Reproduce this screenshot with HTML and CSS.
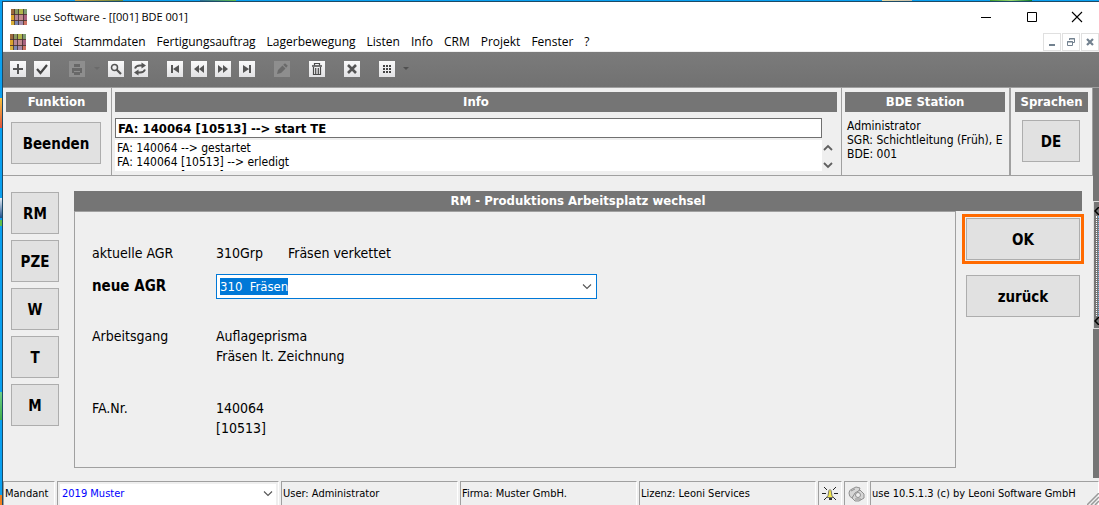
FILE: index.html
```html
<!DOCTYPE html>
<html lang="de">
<head>
<meta charset="utf-8">
<title>use Software - [[001] BDE 001]</title>
<link rel="stylesheet" href="styles.css">
</head>
<body>
<svg class="defs" aria-hidden="true">
  <defs>
    <symbol id="logo" viewBox="0 0 16 16">
      <rect width="16" height="16" fill="#b9826a"/>
      <path fill="#9c6a3c" d="M0 0h4v5H0z"/><path fill="#8a9a62" d="M4 0h4v5H4z"/><path fill="#b0b64a" d="M8 0h4v5H8z"/><path fill="#7f9c70" d="M12 0h4v5h-4z"/>
      <path fill="#dba32c" d="M0 6h4v5H0z"/><path fill="#b58596" d="M4 6h4v5H4z"/><path fill="#c48a8e" d="M8 6h4v5H8z"/><path fill="#a8617f" d="M12 6h4v5h-4z"/>
      <path fill="#d8b03a" d="M0 12h4v4H0z"/><path fill="#7a88b4" d="M4 12h4v4H4z"/><path fill="#a58cab" d="M8 12h4v4H8z"/><path fill="#cf7466" d="M12 12h4v4h-4z"/>
      <path stroke="#3e2b2c" stroke-opacity=".75" d="M3.500 0v16M7.500 0v16M12.500 0v16M0 5.500h16M0 11.500h16"/>
    </symbol>
    <symbol id="chev" viewBox="0 0 10 6"><path d="M1 .5l4 4 4-4" fill="none" stroke="#555" stroke-width="1.100"/></symbol>
  </defs>
</svg>
<div class="desktop">
<div class="window">
  <header class="titlebar">
    <svg class="logo"><use href="#logo"/></svg>
    <h1 class="title">use Software - [[001] BDE 001]</h1>
    <div class="winbuttons">
      <button aria-label="Minimieren"><svg width="12" height="12"><path d="M1 6.500h10" stroke="#000"/></svg></button>
      <button aria-label="Maximieren"><svg width="12" height="12"><path d="M1.500 1.500h9v9h-9z" fill="none" stroke="#000"/></svg></button>
      <button aria-label="Schließen"><svg width="12" height="12"><path d="M1 1l10 10M11 1L1 11" stroke="#000" stroke-width="1.100"/></svg></button>
    </div>
  </header>
  <nav class="menubar">
    <svg class="logo"><use href="#logo"/></svg>
    <div class="menus"><button>Datei</button><button>Stammdaten</button><button>Fertigungsauftrag</button><button>Lagerbewegung</button><button>Listen</button><button>Info</button><button>CRM</button><button>Projekt</button><button>Fenster</button><button>?</button></div>
    <div class="mdibuttons">
      <button aria-label="Fenster minimieren"><svg width="10" height="10"><path d="M2 8h6" stroke="#72818f" stroke-width="2"/></svg></button>
      <button aria-label="Fenster wiederherstellen"><svg width="10" height="10" fill="none" stroke="#72818f"><path d="M3.500 3V1.500h5v4H7M3 2h6M1.500 4.500h5v4h-5zM1 5h6"/></svg></button>
      <button aria-label="Fenster schließen"><svg width="10" height="10"><path d="M2 2l6 6M8 2L2 8" stroke="#72818f" stroke-width="2.200"/></svg></button>
    </div>
  </nav>
  <div class="toolbar" role="toolbar">
    <div class="group">
      <button class="tool" aria-label="Neu"><svg viewBox="0 0 16 16"><path d="M8 3v10M3 8h10" stroke="#555" stroke-width="2"/></svg></button>
      <button class="tool" aria-label="Speichern"><svg viewBox="0 0 16 16"><path d="M3 8l3.500 4L13 4" fill="none" stroke="#444" stroke-width="2.200"/></svg></button>
    </div>
    <div class="group">
      <button class="tool" disabled aria-label="Drucken"><svg viewBox="0 0 16 16" fill="#686868"><path d="M5 3h6v3H5zM3 7h10v5h-2v-2H5v2H3zM5 11h6v3H5z"/></svg></button>
      <svg class="drop faint" viewBox="0 0 7 4"><path d="M1 0h6L4 3z"/></svg>
      <button class="tool" aria-label="Suchen"><svg viewBox="0 0 16 16" fill="none" stroke="#555"><circle cx="6.500" cy="6.500" r="3" stroke-width="1.500"/><path d="M8.500 8.500L13 13" stroke-width="2.200"/></svg></button>
      <button class="tool" aria-label="Aktualisieren"><svg viewBox="0 0 16 16" fill="none" stroke="#555" stroke-width="1.900"><path d="M3 7.500Q4 4.500 8 4.500h3M13 8.500Q12 11.500 8 11.500H5"/><path d="M9.500 1.500L14 4.500 9.500 7.500zM6.500 8.500L2 11.500 6.500 14.500z" fill="#555" stroke="none"/></svg></button>
    </div>
    <div class="group">
      <button class="tool" aria-label="Erster"><svg viewBox="0 0 16 16" fill="#555"><path d="M4 4h2v8H4zM6 8l6-4v8z"/></svg></button>
      <button class="tool" aria-label="Zurückblättern"><svg viewBox="0 0 16 16" fill="#555"><path d="M3 8l5-4v8zM8 8l5-4v8z"/></svg></button>
      <button class="tool" aria-label="Vorblättern"><svg viewBox="0 0 16 16" fill="#555"><path d="M8 8L3 4v8zM13 8L8 4v8z"/></svg></button>
      <button class="tool" aria-label="Letzter"><svg viewBox="0 0 16 16" fill="#555"><path d="M10 4h2v8h-2zM10 8L4 4v8z"/></svg></button>
    </div>
    <div class="group">
      <button class="tool" disabled aria-label="Bearbeiten"><svg viewBox="0 0 16 16" fill="#6a6a6a"><path d="M3 13l1-4 4.500-4.500 3 3L7 12zM9.200 3.800L11 2.200l2.800 2.600-1.600 2z"/></svg></button>
    </div>
    <div class="group">
      <button class="tool" aria-label="Löschen"><svg viewBox="0 0 16 16" fill="none" stroke="#4a4a4a"><path d="M3 5h10" stroke-width="1.500"/><path d="M5.500 4.500V2.500h5v2M4.500 6v7.500h7V6M6.700 7v6M9.300 7v6" stroke-width="1.200"/></svg></button>
    </div>
    <div class="group">
      <button class="tool" aria-label="Abbrechen"><svg viewBox="0 0 16 16"><path d="M4 4l8 8M12 4l-8 8" stroke="#555" stroke-width="2.600"/></svg></button>
    </div>
    <div class="group">
      <button class="tool" aria-label="Ansicht"><svg viewBox="0 0 16 16" fill="#444"><path d="M4 4h2v2H4zM7 4h2v2H7zM10 4h2v2h-2zM4 7h2v2H4zM7 7h2v2H7zM10 7h2v2h-2zM4 10h2v2H4zM7 10h2v2H7zM10 10h2v2h-2z"/></svg></button>
      <svg class="drop" viewBox="0 0 7 4"><path d="M0 0h6L3 3z"/></svg>
    </div>
  </div>

  <div class="workspace">
    <div class="client">
      <div class="top">
        <section class="cell">
          <h2 class="bar">Funktion</h2>
          <button class="btn beenden">Beenden</button>
        </section>
        <section class="cell">
          <h2 class="bar">Info</h2>
          <div class="infobody">
            <input class="current" aria-label="Aktuelle Meldung" value="FA: 140064 [10513] --&gt; start TE" readonly>
            <div class="log">
              <div class="lines"><p>FA: 140064 --&gt; gestartet</p><p>FA: 140064 [10513] --&gt; erledigt</p><p>FA: 140064 [10513] --&gt; start</p></div>
              <div class="spin">
                <button aria-label="Nach oben"><svg viewBox="0 0 10 8"><path d="M1 6l4-4 4 4" fill="none" stroke="#606060" stroke-width="1.800"/></svg></button>
                <button aria-label="Nach unten"><svg viewBox="0 0 10 8"><path d="M1 2l4 4 4-4" fill="none" stroke="#606060" stroke-width="1.800"/></svg></button>
              </div>
            </div>
          </div>
        </section>
        <section class="cell">
          <h2 class="bar">BDE Station</h2>
          <div class="station"><p>Administrator</p><p>SGR: Schichtleitung (Früh), E</p><p>BDE: 001</p></div>
        </section>
        <section class="cell">
          <h2 class="bar">Sprachen</h2>
          <button class="btn lang">DE</button>
        </section>
      </div>
      <main class="content">
        <nav class="side">
          <button class="btn">RM</button><button class="btn">PZE</button><button class="btn">W</button><button class="btn">T</button><button class="btn">M</button>
        </nav>
        <section class="work">
          <h2 class="bar">RM - Produktions Arbeitsplatz wechsel</h2>
          <div class="workbody">
            <form class="panel">
              <span class="label">aktuelle AGR</span>
              <div class="value pair"><span>310Grp</span><span>Fräsen verkettet</span></div>
              <label class="label strong" for="agr">neue AGR</label>
              <div class="combo"><input id="agr" type="text" value="310&nbsp; Fräsen" spellcheck="false" autocomplete="off"><button type="button" aria-label="Auswahl öffnen"><svg width="10" height="6"><use href="#chev"/></svg></button></div>
              <span class="label wide">Arbeitsgang</span>
              <div class="value wide"><p>Auflageprisma</p><p>Fräsen lt. Zeichnung</p></div>
              <span class="label wide">FA.Nr.</span>
              <div class="value wide"><p>140064</p><p>[10513]</p></div>
            </form>
            <div class="actions">
              <div class="mark"><button class="btn">OK</button></div>
              <button class="btn back">zurück</button>
            </div>
          </div>
        </section>
      </main>
    </div>
    <div class="rail">
      <button class="handle" aria-label="Seitenleiste öffnen">
        <svg width="5" height="8"><path d="M5 0L1 4l4 4" fill="none" stroke="#000" stroke-width="1.500"/></svg>
        <span class="dots"></span>
        <svg width="5" height="8"><path d="M5 0L1 4l4 4" fill="none" stroke="#000" stroke-width="1.500"/></svg>
      </button>
    </div>
  </div>

  <footer class="status">
    <label class="sp" for="mandant">Mandant</label>
    <div class="sp selectwrap"><select id="mandant"><option>2019 Muster</option></select><svg class="selchev" width="10" height="6"><use href="#chev"/></svg></div>
    <span class="sp">User: Administrator</span>
    <span class="sp">Firma: Muster GmbH.</span>
    <span class="sp">Lizenz: Leoni Services</span>
    <span class="sp icon"><svg width="16" height="16"><path d="M2 1l3 3M14 1l-3 3M0 7.500h4M16 7.500h-4M2 14l3-3M14 14l-3-3" stroke="#222"/><path d="M4.500 11.500q2-1.500 2-4.500 0-3 1.500-3.500Q9.500 4 9.500 7q0 3 2 4.500z" fill="#f4e84a" stroke="#555" stroke-width=".8"/><path d="M7 12h3v2H7z" fill="#333"/></svg></span>
    <span class="sp icon"><svg width="17" height="16" fill="#d6d6d6" stroke="#909090"><path d="M1 7q0-3 3-4l4-2 4 1-1 3-4 3-3 4q-3-1-3-5z"/><path d="M4 12l3-5 5-3 4 4v4l-5 3H7z"/><circle cx="10" cy="9" r="2.500" fill="#efefef"/><path d="M3 5l4-2M7 13l6 0" fill="none"/></svg></span>
    <span class="sp">use 10.5.1.3 (c) by Leoni Software GmbH</span>
    <svg class="grip" width="12" height="12"><path d="M0 12L12 0M4 12l8-8M8 12l4-4" stroke="#999" stroke-width="1.500"/></svg>
  </footer>
</div>
</div>
<script src="app.js"></script>
</body>
</html>
```
FILE: styles.css
```css
* { box-sizing: border-box; }
html, body { height: 100%; margin: 0; }
body {
  --face: #efefef;
  --dark: #757575;
  --line: #a0a0a0;
  --tahoma: "DejaVu Sans Condensed", "Noto Sans", sans-serif;
  --segoe: "Open Sans", "Noto Sans", sans-serif;
  font: 12px/14px var(--tahoma);
  color: #000;
  overflow: hidden;
}
h1, h2, p { margin: 0; font-weight: normal; }
button, input, select { font: inherit; color: inherit; margin: 0; padding: 0; border: 0; border-radius: 0; background: none; outline: 0; }
svg { display: block; flex: none; }
.defs { position: absolute; width: 0; height: 0; }

.desktop {
  height: 100%;
  min-height: 505px;
  padding: 1px 0 0 2px;
  display: flex;
  background:
    linear-gradient(90deg, #c9a24a, #6d8a3a) 75px 0 / 48px 1px no-repeat,
    linear-gradient(90deg, #2b6e9a, #5fc04a) 200px 0 / 36px 1px no-repeat,
    linear-gradient(90deg, #e8d9a0, #c8c0b0) 882px 0 / 30px 1px no-repeat,
    linear-gradient(90deg, #3d9a2a, #9ad870, #0c7a2c) 990px 0 / 42px 1px no-repeat,
    linear-gradient(#f6c13c, #e0523c) 0 98px / 2px 30px no-repeat,
    linear-gradient(#e6eef6, #1c4f8c) 0 198px / 2px 20px no-repeat,
    linear-gradient(#5fc04a, #5fc04a) 0 220px / 2px 6px no-repeat,
    linear-gradient(#6ad08a, #3fae4a) 0 392px / 2px 28px no-repeat,
    linear-gradient(#f08020, #f08020) 0 495px / 2px 10px no-repeat,
    #0aa0f0;
}
.window { flex: 1; min-width: 0; display: flex; flex-direction: column; border: solid #1d4a66; border-width: 1px 0 0 1px; background: var(--face); }

.titlebar, .menubar { display: flex; align-items: center; background: #fff; font-family: var(--segoe); }
.titlebar { height: 29px; padding-left: 8px; gap: 6px; }
.logo { width: 16px; height: 16px; }
.title { flex: 1; font-size: 11px; line-height: 16px; }
.winbuttons { display: flex; }
.winbuttons button { width: 46px; height: 28px; display: grid; place-items: center; }
.winbuttons button:last-child { width: 44px; }
.menubar { height: 21px; padding-left: 7px; padding-top: 2px; gap: 7px; border-bottom: 1px solid #f0f0f0; font-size: 12px; }
.menus { display: flex; gap: 11px; }
.menus button { line-height: 18px; white-space: nowrap; }
.mdibuttons { margin-left: auto; display: flex; gap: 1px; }
.mdibuttons button { width: 18px; height: 18px; border: 1px solid #e0e0e0; display: grid; place-items: center; }

.toolbar { height: 36px; display: flex; align-items: center; gap: 19px; padding: 0 0 1px 7px; background: linear-gradient(#7b7b7b, #717171); border-bottom: 1px solid var(--line); }
.group { display: flex; align-items: center; gap: 8px; }
.tool { width: 16px; height: 16px; background: linear-gradient(#fafafa, #e2e2e4); }
.tool:disabled { background: #8e8e8e; }
.drop { width: 7px; height: 4px; fill: #505050; }
.drop.faint { fill: #6a6a6a; }

.workspace { flex: 1; min-height: 0; display: flex; background: var(--dark); }
.client { flex: 1; min-width: 0; display: flex; flex-direction: column; background: var(--face); }
.rail { width: 6px; padding-top: 113px; }
.handle { width: 6px; height: 128px; display: flex; flex-direction: column; align-items: flex-end; justify-content: space-between; padding: 5px 0 3px; border: solid #ddd; border-width: 1px 0 1px 1px; }
.dots { width: 3px; height: 100px; border-left: 1px dotted #fff; border-right: 1px dotted #7db4e0; }

.top { display: grid; grid-template-columns: 109px minmax(0, 1fr) 169px 82px; height: 88px; border-bottom: 1px solid var(--line); }
.cell { min-width: 0; padding: 4px 4px 0 3px; border-right: 1px solid var(--line); }
.cell:nth-child(3) { border-right-width: 2px; }
.cell:nth-child(4) { padding-left: 4px; }
.bar { height: 20px; background: var(--dark); color: #fff; text-align: center; font: bold 13px/20px var(--tahoma); white-space: nowrap; }
.btn { height: 42px; padding-top: 1px; background: #e1e1e1; border: 1px solid #adadad; font: bold 15px/20px var(--tahoma); }
.beenden { width: 90px; margin: 10px 0 0 5px; display: block; }
.lang { width: 58px; margin: 8px auto 0 7px; display: block; }
.infobody { padding-top: 6px; }
.current { display: block; width: calc(100% - 15px); height: 20px; padding: 0 2px; background: #fff; border: 1px solid #707070; font: bold 13px/16px var(--tahoma); }
.log { display: flex; margin-top: 2px; height: 31px; }
.lines { flex: 1; background: #fff; overflow: hidden; padding: 1px 2px 0; }
.spin { width: 15px; display: flex; flex-direction: column; justify-content: space-between; align-items: center; padding: 4px 3px 2px 0; }
.spin button, .spin svg { width: 10px; height: 8px; display: block; }
.station { padding: 7px 0 0 2px; white-space: nowrap; overflow: hidden; }

.content { flex: 1; display: flex; padding: 15px 11px 10px 8px; gap: 15px; }
.side { width: 48px; display: flex; flex-direction: column; gap: 6px; padding-top: 1px; }
.work { flex: 1; display: flex; flex-direction: column; }
.workbody { flex: 1; display: flex; gap: 6px; }
.panel { flex: 1; display: grid; grid-template-columns: 124px 1fr; align-content: start; padding: 29px 17px 0; border: 1px solid var(--line); font-size: 14px; line-height: 20px; }
.label { padding-top: 2px; }
.value { padding-top: 2px; }
.strong { font-size: 15px; font-weight: bold; padding-top: 13px; }
.pair { display: grid; grid-template-columns: 72px 1fr; }
.combo { display: flex; width: 381px; max-width: 100%; height: 25px; margin-top: 11px; margin-bottom: 17px; background: #fff; border: 1px solid #0078d7; }
.combo input { flex: 1; min-width: 0; padding: 0 3px; font-size: 13px; line-height: 17px; }
.combo input::selection { background: #0078d7; color: #fff; }
.combo button { width: 18px; display: grid; place-items: center; }
.wide { padding-top: 10px; margin-bottom: 22px; }
.actions { width: 120px; padding-top: 3px; display: flex; flex-direction: column; gap: 11px; }
.mark { width: 122px; border: 3px solid #ff6a00; padding: 1px; display: flex; }
.mark .btn { flex: 1; }
.back { width: 114px; margin-left: 4px; }

.status { display: grid; grid-template-columns: 52px 222px 177px 177px 177px 24px 24px 1fr; gap: 2px; height: 27px; padding-top: 3px; font: 11px/14px var(--tahoma); position: relative; white-space: nowrap; }
.sp { display: flex; align-items: center; min-width: 0; padding-left: 1px; border: solid var(--line); border-width: 1px 0 0 1px; border-right: 1px solid #fff; }
.icon { justify-content: center; padding: 0; }
.selectwrap { position: relative; padding: 2px 2px 0; }
.selectwrap select { flex: 1; height: 100%; appearance: none; background: #fff; color: #0000ff; padding: 0 0 2px 2px; }
.selchev { position: absolute; right: 5px; top: 9px; pointer-events: none; }
.grip { position: absolute; right: 0; bottom: 0; }
```
FILE: app.js
```js
const agr = document.getElementById("agr");
agr.focus();
agr.select();
```
